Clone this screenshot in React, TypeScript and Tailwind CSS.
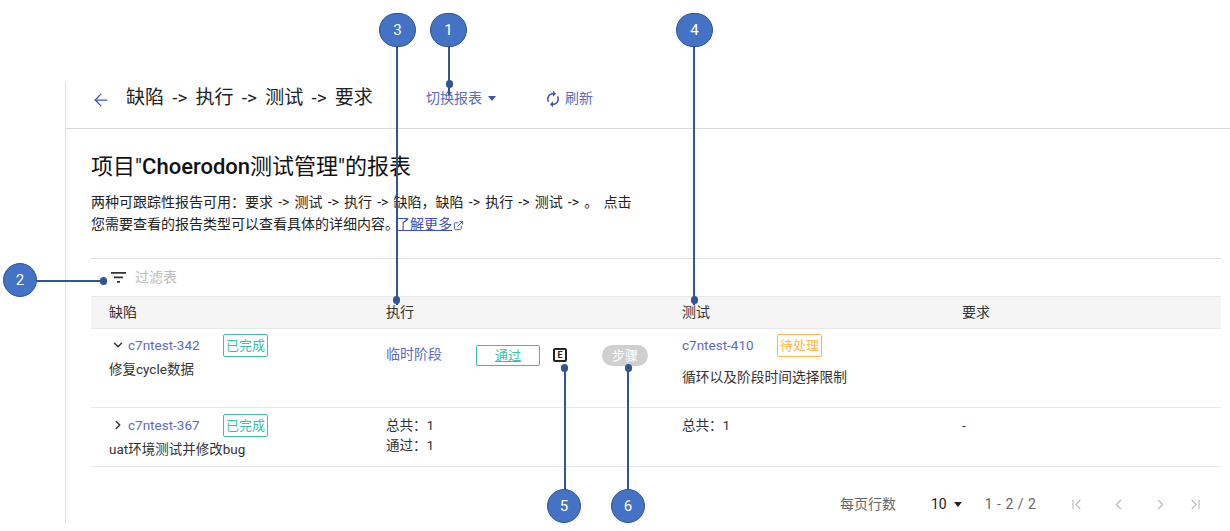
import React from 'react';
import { ArrowLeft, ChevronDown, ChevronRight, ChevronLeft, ExternalLink, ChevronFirst, ChevronLast } from 'lucide-react';
import { MdAutorenew } from 'react-icons/md';

const FONT = '"Roboto", "Noto Sans CJK SC", sans-serif';

const Caret: React.FC<{ className?: string }> = ({ className }) => (
  <svg width="8" height="5" viewBox="0 0 8 5" className={className}>
    <path d="M0 0h8L4 5z" fill="currentColor" />
  </svg>
);

const StatusTag: React.FC<{ children: React.ReactNode; className: string }> = ({ children, className }) => (
  <span className={`flex items-center justify-center rounded-[2px] border text-[13px] leading-none ${className}`}>{children}</span>
);

// numbered callout: circle plus leader line, placed over the screenshot
const Callout: React.FC<{ n: number; cls: string; lineCls: string; dotCls: string }> = ({ n, cls, lineCls, dotCls }) => (
  <>
    <div className={`absolute bg-[#2f5597] ${lineCls}`} />
    <div className={`absolute h-[8px] w-[7px] rounded-full bg-[#2f5597] ${dotCls}`} />
    <div className={`absolute flex h-[34px] items-center justify-center rounded-full border border-[#2f5597] bg-[#4472c4] text-[15px] text-white ${cls}`}>
      {n}
    </div>
  </>
);

export default function App() {
  return (
    <div className="relative h-[531px] w-[1230px] overflow-hidden bg-white" style={{ fontFamily: FONT }}>
      <div className="flex pl-[65px] pt-[82px]">
        <div className="h-[441px] w-full border-l border-[#dcdfe6]">
          {/* header bar */}
          <div className="flex h-[47px] items-center border-b border-[#d9d9d9] pb-[14px] pl-[25px] pt-[1px]">
            <ArrowLeft size={20} strokeWidth={1.5} className="mt-[3px] text-[#3f51b5]" />
            <span className="ml-[15px] w-[300px] text-[19px] text-[#222] [word-spacing:3.5px]">缺陷 -&gt; 执行 -&gt; 测试 -&gt; 要求</span>
            <span className="text-[14px] text-[#5c6bc0]">切换报表</span>
            <Caret className="ml-[6px] text-[#3f51b5]" />
            <MdAutorenew size={18} className="ml-[48px] text-[#3f51b5]" />
            <span className="ml-[3px] text-[14px] text-[#5c6bc0]">刷新</span>
          </div>

          <div className="pl-[25px] pr-[9px]">
            <h1 className="mt-[24px] text-[22px] leading-[28px] font-normal text-[#111]">
              项目"<span className="font-medium">Choerodon</span>测试管理"的报表
            </h1>
            <p className="mt-[10px] text-[14px] leading-[22px] text-[#222] [word-spacing:1.7px]">
              两种可跟踪性报告可用：要求 -&gt; 测试 -&gt; 执行 -&gt; 缺陷，缺陷 -&gt; 执行 -&gt; 测试 -&gt; 。 点击
              <br />
              您需要查看的报告类型可以查看具体的详细内容。
              <span className="ml-[-3px] text-[#3f51b5] underline">了解更多</span>
              <ExternalLink size={11} className="ml-[1px] inline text-[#3f51b5]" />
            </p>

            {/* filter */}
            <div className="mt-[23px] flex h-[38px] items-center border-t border-[#e0e0e0] pl-[20px]">
              <svg width="15" height="11" viewBox="0 0 15 11" className="text-[#333]">
                <path d="M0 0h15v1.8H0zM3 4.5h9v1.8H3zM6 9h3v1.8H6z" fill="currentColor" />
              </svg>
              <span className="ml-[9px] text-[14px] text-[#bdbdbd]">过滤表</span>
            </div>

            {/* table */}
            <div className="grid h-[32px] grid-cols-[277px_296px_280px_1fr] items-center border-t border-[#e8e8e8] bg-[#f5f5f5] text-[14px] text-[#333]">
              <span className="pl-[18px]">缺陷</span>
              <span className="pl-[18px]">执行</span>
              <span className="pl-[18px]">测试</span>
              <span className="pl-[18px]">要求</span>
            </div>

            <div className="grid h-[80px] grid-cols-[277px_296px_280px_1fr] border-t border-b border-[#e8e8e8] text-[13.5px] text-[#333]">
              <div className="pl-[18px] pt-[4px]">
                <div className="flex h-[24px] items-center">
                  <ChevronDown size={14} strokeWidth={2.5} className="ml-[2px] text-[#333]" />
                  <span className="ml-[3px] w-[95px] text-[#5c6bc0]">c7ntest-342</span>
                  <StatusTag className="h-[23px] w-[45px] border-[#36c2a8] text-[#36c2a8]">已完成</StatusTag>
                </div>
                <div className="mt-[2px] leading-[20px]">修复cycle数据</div>
              </div>
              <div className="flex items-start pl-[18px] pt-[15px]">
                <span className="w-[90px] text-[14px] leading-[20px] text-[#5c6bc0]">临时阶段</span>
                <StatusTag className="mt-[1px] h-[21px] w-[64px] border-[#36c2a8] text-[#36c2a8] underline">通过</StatusTag>
                <span className="ml-[13px] mt-[4px] flex h-[14px] w-[14px] items-center justify-center rounded-[2px] border-2 border-[#222] text-[9px] leading-none font-bold text-[#222]">E</span>
                <span className="ml-[35px] mt-[1px] flex h-[21px] w-[46px] items-center justify-center rounded-full bg-[#cfcfcf] text-[13px] text-white">步骤</span>
              </div>
              <div className="pl-[18px] pt-[4px]">
                <div className="flex h-[24px] items-center">
                  <span className="w-[95px] text-[#5c6bc0]">c7ntest-410</span>
                  <StatusTag className="h-[23px] w-[45px] border-[#ffb74d] text-[#ffb74d]">待处理</StatusTag>
                </div>
                <div className="mt-[10px] text-[13.75px] leading-[20px]">循环以及阶段时间选择限制</div>
              </div>
              <div />
            </div>

            <div className="grid h-[59px] grid-cols-[277px_296px_280px_1fr] border-b border-[#e8e8e8] text-[13.5px] text-[#333]">
              <div className="pl-[18px] pt-[5px]">
                <div className="flex h-[24px] items-center">
                  <ChevronRight size={14} strokeWidth={2.5} className="ml-[2px] text-[#333]" />
                  <span className="ml-[3px] w-[95px] text-[#5c6bc0]">c7ntest-367</span>
                  <StatusTag className="h-[23px] w-[45px] border-[#36c2a8] text-[#36c2a8]">已完成</StatusTag>
                </div>
                <div className="mt-[2px] leading-[20px]">uat环境测试并修改bug</div>
              </div>
              <div className="pl-[18px] pt-[7px] leading-[20px]">
                <div>总共：1</div>
                <div>通过：1</div>
              </div>
              <div className="pl-[18px] pt-[7px] leading-[20px]">总共：1</div>
              <div className="pl-[18px] pt-[7px] leading-[20px]">-</div>
            </div>

            {/* pagination */}
            <div className="flex h-[74px] items-center pl-[749px] text-[14px] text-[#666]">
              <span className="w-[91px]">每页行数</span>
              <span className="text-[#222]">10</span>
              <Caret className="ml-[7px] text-[#222]" />
              <span className="ml-[23px] w-[83px] tracking-[0.5px]">1 - 2 / 2</span>
              <ChevronFirst size={17} strokeWidth={1.5} className="text-[#b8b8b8]" />
              <ChevronLeft size={17} strokeWidth={1.5} className="ml-[25px] text-[#b8b8b8]" />
              <ChevronRight size={17} strokeWidth={1.5} className="ml-[25px] text-[#b8b8b8]" />
              <ChevronLast size={17} strokeWidth={1.5} className="ml-[18px] text-[#b8b8b8]" />
            </div>
          </div>
        </div>
      </div>

      {/* annotation overlay */}
      <Callout n={3} cls="left-[379px] top-[13px] w-[37px]" lineCls="left-[396px] top-[46px] h-[259px] w-[2px]" dotCls="left-[393px] top-[296px]" />
      <Callout n={1} cls="left-[430px] top-[13px] w-[37px]" lineCls="left-[448px] top-[46px] h-[49px] w-[2px]" dotCls="left-[446px] top-[80px]" />
      <Callout n={4} cls="left-[676px] top-[13px] w-[37px]" lineCls="left-[693px] top-[46px] h-[259px] w-[2px]" dotCls="left-[691px] top-[296px]" />
      <Callout n={2} cls="left-[3px] top-[263px] w-[34px]" lineCls="left-[36px] top-[280px] h-[2px] w-[66px]" dotCls="left-[100px] top-[277px]" />
      <Callout n={5} cls="left-[547px] top-[489px] w-[34px]" lineCls="left-[564px] top-[368px] h-[122px] w-[2px]" dotCls="left-[561px] top-[364px]" />
      <Callout n={6} cls="left-[611px] top-[489px] w-[34px]" lineCls="left-[627px] top-[368px] h-[122px] w-[2px]" dotCls="left-[625px] top-[364px]" />
    </div>
  );
}
